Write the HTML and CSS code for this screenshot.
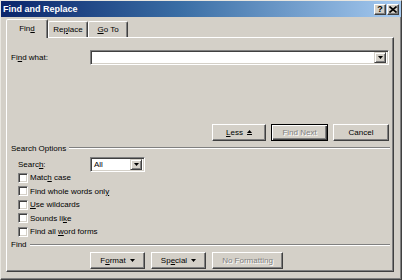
FILE: index.html
```html
<!DOCTYPE html>
<html>
<head>
<meta charset="utf-8">
<link rel="stylesheet" href="styles.css">
</head>
<body>
<div class="dialog">
  <div class="titlebar">
    <span class="title">Find and Replace</span>
    <div class="tb-btns">
      <span class="tb-btn help">?</span>
      <span class="tb-btn close"><svg width="8" height="7" viewBox="0 0 8 7"><path d="M0.5 0.5L7.5 6.5M7.5 0.5L0.5 6.5" stroke="#000" stroke-width="1.6"/></svg></span>
    </div>
  </div>
  <div class="tabs">
    <div class="tab active"><span>Fin<u>d</u></span></div>
    <div class="tab"><span>Re<u>p</u>lace</span></div>
    <div class="tab"><span><u>G</u>o To</span></div>
  </div>
  <div class="panel">
    <div class="find-row">
      <span class="label">Fi<u>n</u>d what:</span>
      <div class="combo wide">
        <span class="combo-text"></span>
        <span class="drop"><svg width="5" height="3" viewBox="0 0 5 3"><path d="M0 0H5L2.5 3Z" fill="#000"/></svg></span>
      </div>
    </div>
    <div class="btn-row right">
      <span class="btn less"><span><u>L</u>ess</span><svg width="5" height="5" viewBox="0 0 5 5"><path d="M0 3L2.5 0L5 3Z" fill="#000"/><rect x="0" y="4" width="5" height="1" fill="#000"/></svg></span>
      <span class="btn default disabled next"><span>Find Next</span></span>
      <span class="btn cancel"><span>Cancel</span></span>
    </div>
    <div class="group-head"><span class="gh-text">Search Options</span><span class="gh-line"></span></div>
    <div class="search-row">
      <span class="label s-label">Searc<u>h</u>:</span>
      <div class="combo small">
        <span class="combo-text">All</span>
        <span class="drop"><svg width="5" height="3" viewBox="0 0 5 3"><path d="M0 0H5L2.5 3Z" fill="#000"/></svg></span>
      </div>
    </div>
    <div class="checks">
      <div class="check"><span class="box"></span><span>Matc<u>h</u> case</span></div>
      <div class="check"><span class="box"></span><span>Find whole words onl<u>y</u></span></div>
      <div class="check"><span class="box"></span><span><u>U</u>se wildcards</span></div>
      <div class="check"><span class="box"></span><span>Sounds li<u>k</u>e</span></div>
      <div class="check"><span class="box"></span><span>Find all <u>w</u>ord forms</span></div>
    </div>
    <div class="group-head find-head"><span class="gh-text">Find</span><span class="gh-line"></span></div>
    <div class="btn-row fmt-row">
      <span class="btn fmt"><span>F<u>o</u>rmat</span><svg width="5" height="3" viewBox="0 0 5 3"><path d="M0 0H5L2.5 3Z" fill="#000"/></svg></span>
      <span class="btn fmt"><span>Sp<u>e</u>cial</span><svg width="5" height="3" viewBox="0 0 5 3"><path d="M0 0H5L2.5 3Z" fill="#000"/></svg></span>
      <span class="btn disabled nofmt"><span>No Formatting</span></span>
    </div>
  </div>
</div>
</body>
</html>
```

FILE: styles.css
```css
* { box-sizing: border-box; }
html, body { margin: 0; padding: 0; }
body {
  width: 402px;
  height: 280px;
  overflow: hidden;
  background: #d4d0c8;
  font-family: "Liberation Sans", Arial, sans-serif;
  font-size: 8px;
  color: #000;
}
u { text-decoration: underline; text-underline-offset: 1px; }

.dialog {
  width: 402px;
  height: 280px;
  background: #d4d0c8;
  border: 1px solid;
  border-color: #e8e6e0 #404040 #404040 #e8e6e0;
  box-shadow: inset -1px -1px #808080;
  display: flex;
  flex-direction: column;
}

.titlebar {
  height: 16px;
  background: linear-gradient(to right, #0a246a 0%, #3a6ea5 45%, #a6caf0 100%);
  display: flex;
  align-items: center;
  justify-content: space-between;
  padding: 0 2px 0 2px;
}
.title {
  color: #fff;
  font-weight: bold;
  font-size: 9px;
}
.tb-btns { display: flex; gap: 1px; }
.tb-btn {
  width: 12px;
  height: 11px;
  background: #d4d0c8;
  border: 1px solid;
  border-color: #fff #404040 #404040 #fff;
  box-shadow: inset -1px -1px #808080;
  display: flex;
  align-items: center;
  justify-content: center;
  font-weight: bold;
  font-size: 9px;
  line-height: 1;
}

.tabs {
  height: 20px;
  display: flex;
  align-items: flex-end;
  padding-left: 5px;
}
.tab {
  height: 16px;
  border: 1px solid;
  border-bottom: none;
  border-color: #fff #404040 transparent #fff;
  box-shadow: inset -1px 0 #808080;
  border-radius: 2px 2px 0 0;
  display: flex;
  align-items: center;
  justify-content: center;
  width: 40px;
}
.tab.active {
  width: 42px;
  height: 19px;
  margin-bottom: -1px;
  position: relative;
  z-index: 1;
  background: #d4d0c8;
  padding-bottom: 1px;
}

.panel {
  margin-left: 5px;
  width: 388px;
  height: 235px;
  border: 1px solid;
  border-color: #fff #404040 #404040 #fff;
  box-shadow: inset -1px -1px #808080;
  display: flex;
  flex-direction: column;
}

.find-row {
  margin-top: 12px;
  height: 15px;
  display: flex;
  align-items: center;
  padding-left: 4px;
}
.label { width: 79px; }
.s-label { width: 72px; }

.combo {
  height: 15px;
  background: #fff;
  border: 1px solid;
  border-color: #808080 #fff #fff #808080;
  box-shadow: inset 1px 1px #404040, inset -1px -1px #d4d0c8;
  display: flex;
  align-items: center;
  justify-content: space-between;
  padding: 2px;
}
.combo.wide { width: 299px; }
.combo.small { width: 55px; }
.combo-text { padding-left: 1px; }
.drop {
  width: 12px;
  height: 11px;
  background: #d4d0c8;
  border: 1px solid;
  border-color: #d4d0c8 #404040 #404040 #d4d0c8;
  box-shadow: inset 1px 1px #fff, inset -1px -1px #808080;
  display: flex;
  align-items: center;
  justify-content: center;
}

.btn-row { display: flex; height: 17px; }
.btn-row.right {
  margin-top: 59px;
  justify-content: flex-end;
  padding-right: 4px;
  gap: 5px;
}
.btn {
  height: 17px;
  background: #d4d0c8;
  border: 1px solid;
  border-color: #fff #404040 #404040 #fff;
  box-shadow: inset -1px -1px #808080;
  display: flex;
  align-items: center;
  justify-content: center;
  gap: 4px;
}
.btn.default {
  border-color: #000;
  box-shadow: inset 1px 1px #fff, inset -1px -1px #404040, inset -2px -2px #808080;
}
.btn.disabled { color: #808080; text-shadow: 1px 1px 0 #fff; }
.less { width: 54px; }
.next { width: 57px; }
.cancel { width: 56px; }

.group-head {
  margin-top: 2px;
  height: 10px;
  display: flex;
  align-items: center;
  padding-left: 4px;
  padding-right: 3px;
}
.gh-text { padding-right: 3px; }
.gh-line {
  flex: 1;
  height: 2px;
  border-top: 1px solid #808080;
  border-bottom: 1px solid #fff;
}

.search-row {
  margin-top: 4px;
  height: 15px;
  display: flex;
  align-items: center;
  padding-left: 11px;
}

.checks {
  margin-top: -1px;
  padding-left: 11px;
  display: flex;
  flex-direction: column;
}
.check {
  height: 13.5px;
  display: flex;
  align-items: center;
  gap: 2px;
}
.box {
  width: 10px;
  height: 10px;
  background: #fff;
  border: 1px solid;
  border-color: #808080 #fff #fff #808080;
  box-shadow: inset 1px 1px #404040, inset -1px -1px #d4d0c8;
}

.find-head { margin-top: 1px; }

.fmt-row {
  margin-top: 2px;
  padding-left: 83px;
  gap: 6px;
}
.fmt { width: 55px; }
.nofmt { width: 71px; }
```
